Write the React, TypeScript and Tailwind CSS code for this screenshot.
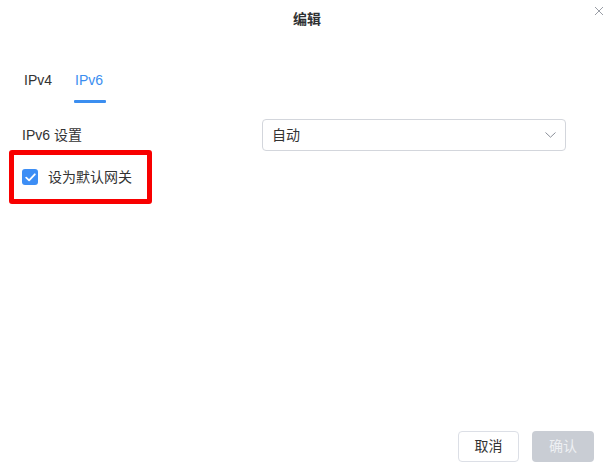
import React from "react";

const FONT = {
  fontFamily: '"Liberation Sans", Arial, "Noto Sans CJK SC", sans-serif',
};

function CloseIcon() {
  return (
    <svg width="10" height="10" viewBox="0 0 10 10" fill="none">
      <path d="M1 1L9 9M9 1L1 9" stroke="#9a9ea6" strokeWidth="1" />
    </svg>
  );
}

function Chevron() {
  return (
    <svg width="11" height="6" viewBox="0 0 11 6" fill="none">
      <path d="M0.5 0.5L5.5 5.2L10.5 0.5" stroke="#8a8f98" strokeWidth="1" />
    </svg>
  );
}

function Checkbox() {
  return (
    <div className="w-[16px] h-[16px] rounded-[3px] bg-[#3d8ef5] flex items-center justify-center">
      <svg width="11" height="9" viewBox="0 0 11 9" fill="none">
        <path d="M1.2 4.6L4.1 7.3L9.8 1.3" stroke="#ffffff" strokeWidth="1.8" strokeLinecap="round" strokeLinejoin="round" />
      </svg>
    </div>
  );
}

export default function App() {
  return (
    <div className="relative w-[614px] h-[476px] bg-white flex flex-col text-[14px] text-[#333]" style={FONT}>
      {/* header */}
      <div className="h-[38px] flex items-center justify-center font-bold text-[14px] text-[#303133]">
        编辑
      </div>
      <button className="absolute right-[10px] top-[6px] w-[10px] h-[10px] flex items-center justify-center">
        <CloseIcon />
      </button>

      {/* body */}
      <div className="flex-1 px-[22px]">
        {/* tabs */}
        <div className="mt-[32px] flex gap-[23px] pl-[2px]">
          <div className="relative pb-[13px]">
            <span className="block leading-[20px] text-[#333]">IPv4</span>
          </div>
          <div className="relative pb-[13px]">
            <span className="block leading-[20px] text-[#3b8ef0]">IPv6</span>
            <div className="absolute left-[-1px] bottom-0 h-[3px] w-[32px] rounded-[1px] bg-[#3b8ef0]" />
          </div>
        </div>

        {/* IPv6 setting row */}
        <div className="mt-[16px] flex items-center">
          <div className="w-[240px] leading-[20px]">IPv6 设置</div>
          <div className="w-[304px] h-[32px] border border-[#d3d6dc] rounded-[4px] flex items-center justify-between pl-[9px] pr-[9px]">
            <span className="text-[#333]">自动</span>
            <Chevron />
          </div>
        </div>

        {/* default gateway */}
        <div className="relative mt-[4px] h-[44px] flex items-center gap-[10px]">
          <Checkbox />
          <span className="text-[#333]">设为默认网关</span>
          <div className="absolute left-[-13px] top-[-5px] w-[143px] h-[54px] border-[5px] border-[#f80000] rounded-[3px] pointer-events-none" />
        </div>
      </div>

      {/* footer */}
      <div className="flex justify-end gap-[13px] pr-[20px] pb-[14px]">
        <button className="w-[61px] h-[31px] border border-[#dcdfe6] rounded-[4px] bg-white text-[#333] text-[14px] flex items-center justify-center">
          取消
        </button>
        <button className="w-[62px] h-[31px] rounded-[4px] bg-[#c9cdd4] text-[#eef0f3] text-[14px] flex items-center justify-center">
          确认
        </button>
      </div>
    </div>
  );
}
